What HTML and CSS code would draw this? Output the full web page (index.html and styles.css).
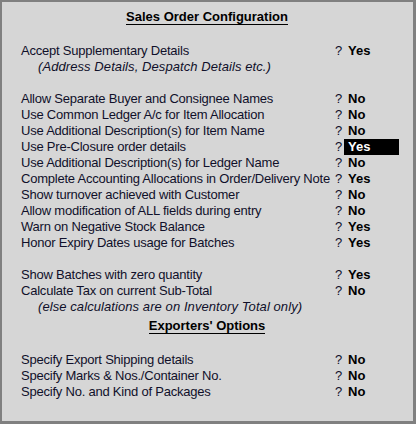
FILE: index.html
```html
<!DOCTYPE html>
<html>
<head>
<meta charset="utf-8">
<link rel="stylesheet" href="styles.css">
</head>
<body>
<div class="window">
  <div class="title"><span>Sales Order Configuration</span></div>
  <div class="grid">
    <div class="label">Accept Supplementary Details</div><div class="q">?</div><div class="val">Yes</div>
    <div class="note">(Address Details, Despatch Details etc.)</div>
    <div class="blank"></div>
    <div class="label">Allow Separate Buyer and Consignee Names</div><div class="q">?</div><div class="val">No</div>
    <div class="label">Use Common Ledger A/c for Item Allocation</div><div class="q">?</div><div class="val">No</div>
    <div class="label">Use Additional Description(s) for Item Name</div><div class="q">?</div><div class="val">No</div>
    <div class="label">Use Pre-Closure order details</div><div class="q">?</div><div class="val active">Yes</div>
    <div class="label">Use Additional Description(s) for Ledger Name</div><div class="q">?</div><div class="val">No</div>
    <div class="label">Complete Accounting Allocations in Order/Delivery Note</div><div class="q">?</div><div class="val">Yes</div>
    <div class="label">Show turnover achieved with Customer</div><div class="q">?</div><div class="val">No</div>
    <div class="label">Allow modification of ALL fields during entry</div><div class="q">?</div><div class="val">No</div>
    <div class="label">Warn on Negative Stock Balance</div><div class="q">?</div><div class="val">Yes</div>
    <div class="label">Honor Expiry Dates usage for Batches</div><div class="q">?</div><div class="val">Yes</div>
    <div class="blank"></div>
    <div class="label">Show Batches with zero quantity</div><div class="q">?</div><div class="val">Yes</div>
    <div class="label">Calculate Tax on current Sub-Total</div><div class="q">?</div><div class="val">No</div>
    <div class="note">(else calculations are on Inventory Total only)</div>
  </div>
  <div class="title sub"><span>Exporters' Options</span></div>
  <div class="grid">
    <div class="label">Specify Export Shipping details</div><div class="q">?</div><div class="val">No</div>
    <div class="label">Specify Marks &amp; Nos./Container No.</div><div class="q">?</div><div class="val">No</div>
    <div class="label">Specify No. and Kind of Packages</div><div class="q">?</div><div class="val">No</div>
  </div>
</div>
</body>
</html>
```

FILE: styles.css
```css
html, body {
  margin: 0;
  padding: 0;
  background: #d6d6d6;
}
.window {
  box-sizing: border-box;
  width: 416px;
  height: 424px;
  background: #d6d6d6;
  border-style: solid;
  border-color: #808080;
  border-width: 2px 3px 3px 2px;
  padding: 7px 0 0 19px;
  font-family: "Liberation Sans", Arial, sans-serif;
  font-size: 13px;
  line-height: 16px;
  color: #10102a;
}
.title {
  width: 372px;
  text-align: center;
  font-weight: bold;
  color: #000;
  margin-bottom: 18px;
}
.title span {
  display: inline-block;
  border-bottom: 1px solid #000;
  line-height: 15px;
  height: 15px;
}
.title.sub {
  margin-top: 3px;
}
.grid {
  display: grid;
  grid-template-columns: 313px 10px 55px;
  grid-auto-rows: 16px;
}
.label {
  white-space: nowrap;
  letter-spacing: -0.22px;
}
.q {
  padding-left: 1px;
}
.val {
  font-weight: bold;
  color: #000;
  padding-left: 4px;
}
.val.active {
  background: #000;
  color: #fff;
}
.note {
  grid-column: 1 / 4;
  padding-left: 17px;
  font-style: italic;
  letter-spacing: 0.08px;
}
.blank {
  grid-column: 1 / 4;
}
```
